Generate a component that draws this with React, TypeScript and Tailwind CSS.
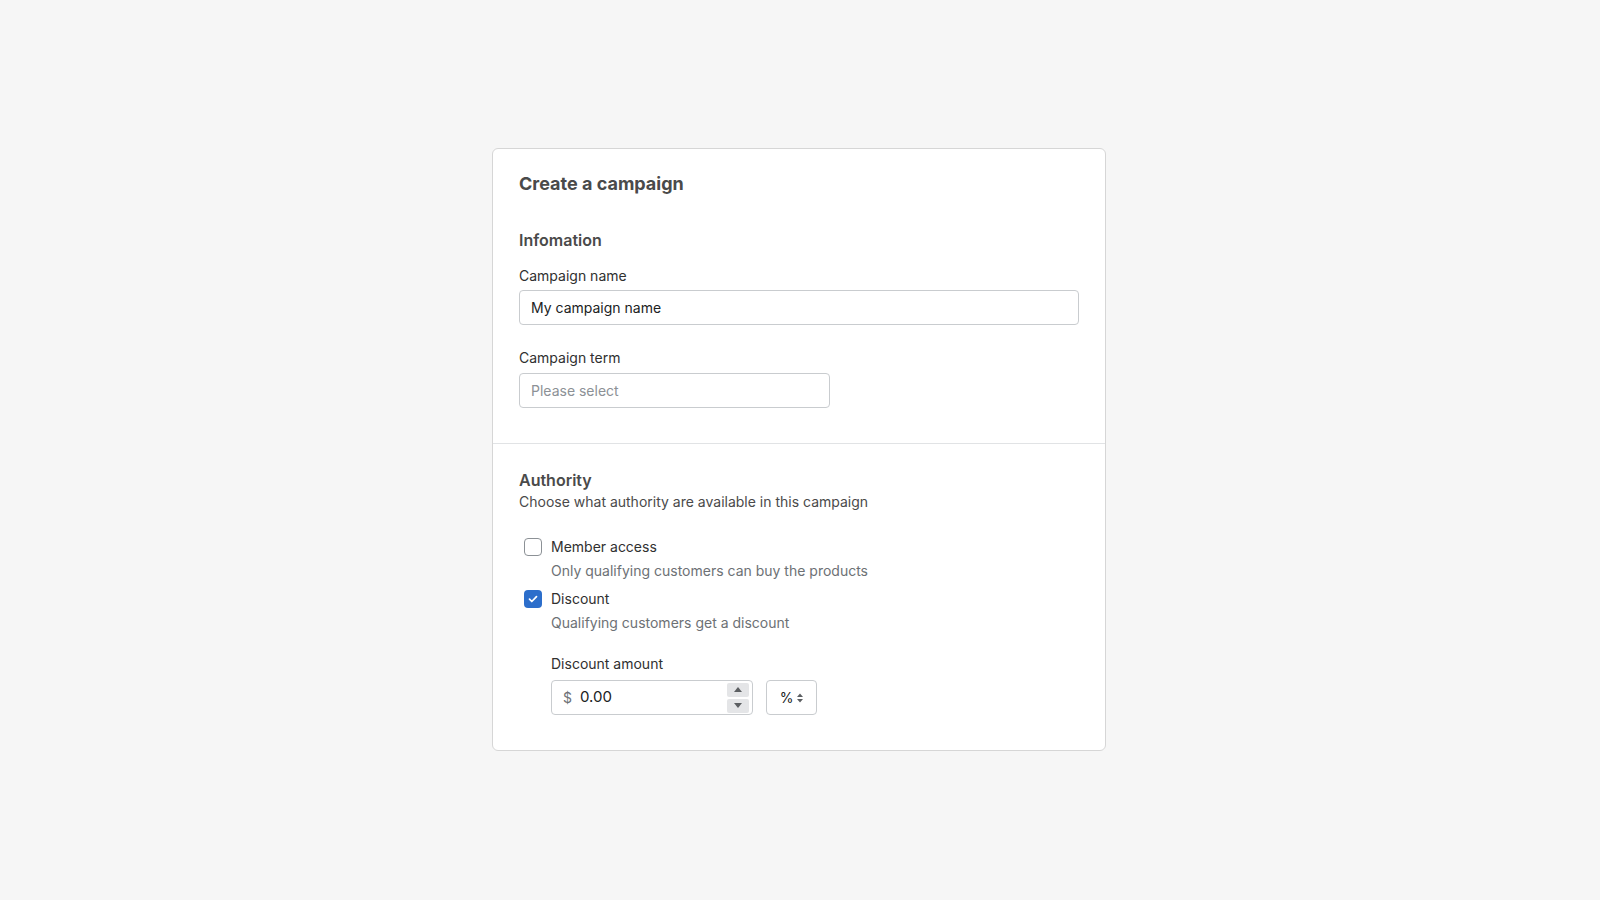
import { useState } from "react";

function Checkbox({ checked, onChange }: { checked: boolean; onChange: () => void }) {
  return (
    <button
      type="button"
      onClick={onChange}
      className={
        checked
          ? "flex h-[18px] w-[18px] shrink-0 items-center justify-center rounded-[4px] bg-[#2c6ecb]"
          : "flex h-[18px] w-[18px] shrink-0 items-center justify-center rounded-[4px] border-[1.5px] border-[#8c9196] bg-white"
      }
    >
      {checked && (
        <svg width="12" height="12" viewBox="0 0 12 12" fill="none">
          <path d="M2.5 6.2l2.3 2.3L9.5 3.6" stroke="white" strokeWidth="1.7" strokeLinecap="round" strokeLinejoin="round" />
        </svg>
      )}
    </button>
  );
}

function Option({
  label,
  help,
  checked,
  onChange,
}: {
  label: string;
  help: string;
  checked: boolean;
  onChange: () => void;
}) {
  return (
    <div className="flex gap-[9px] pl-[5px]">
      <div className="flex h-5 items-center">
        <Checkbox checked={checked} onChange={onChange} />
      </div>
      <div>
        <div className="text-[14px] leading-5 text-[#303030]">{label}</div>
        <div className="mt-[4px] text-[14px] leading-5 text-[#6d7175]">{help}</div>
      </div>
    </div>
  );
}

export default function App() {
  const [member, setMember] = useState(false);
  const [discount, setDiscount] = useState(true);

  return (
    <div className="flex min-h-screen justify-center bg-[#f6f6f6] pr-[2px] pt-[148px] font-['Inter',sans-serif]">
      <div className="h-fit w-[614px] rounded-[6px] border border-[#d6d6d6] bg-white">
        <section className="px-[26px] pb-[35px] pt-[23px]">
          <h1 className="text-[18px] font-bold leading-6 text-[#4a4a4a]">Create a campaign</h1>

          <h2 className="mt-[33px] text-[16px] font-semibold leading-[22px] text-[#4a4a4a]">Infomation</h2>

          <label className="mt-[15px] block text-[14px] leading-5 text-[#303030]">Campaign name</label>
          <input
            defaultValue="My campaign name"
            className="mt-[4px] block h-[35px] w-full rounded-[4px] border border-[#c9cccf] px-[11px] text-[14px] text-[#202223] outline-none"
          />

          <label className="mt-[23px] block text-[14px] leading-5 text-[#303030]">Campaign term</label>
          <div className="mt-[5px] flex h-[35px] w-[311px] items-center rounded-[4px] border border-[#c9cccf] px-[11px] text-[14px] text-[#8c9196]">
            Please select
          </div>
        </section>

        <div className="h-px bg-[#e1e3e5]" />

        <section className="px-[26px] pb-[35px] pt-[25px]">
          <h2 className="text-[16px] font-semibold leading-[22px] text-[#4a4a4a]">Authority</h2>
          <p className="mt-px text-[14px] leading-5 text-[#4a4a4a]">Choose what authority are available in this campaign</p>

          <div className="mt-[25px] flex flex-col gap-[8px]">
            <Option
              label="Member access"
              help="Only qualifying customers can buy the products"
              checked={member}
              onChange={() => setMember(!member)}
            />
            <Option
              label="Discount"
              help="Qualifying customers get a discount"
              checked={discount}
              onChange={() => setDiscount(!discount)}
            />
          </div>

          <div className="mt-[21px] pl-[32px]">
            <label className="block text-[14px] leading-5 text-[#303030]">Discount amount</label>
            <div className="mt-[6px] flex gap-[13px]">
              <div className="flex h-[35px] w-[202px] items-center rounded-[4px] border border-[#c9cccf] pl-[11px] pr-[3px]">
                <span className="text-[14px] text-[#6d7175]">$</span>
                <span className="ml-[8px] flex-1 text-[15px] text-[#202223]">0.00</span>
                <div className="flex flex-col gap-[2px]">
                  <div className="flex h-[14px] w-[22px] items-center justify-center rounded-[2px] bg-[#e4e5e7]">
                    <svg width="8" height="5" viewBox="0 0 8 5">
                      <path d="M4 0L8 5H0z" fill="#5c5f62" />
                    </svg>
                  </div>
                  <div className="flex h-[14px] w-[22px] items-center justify-center rounded-[2px] bg-[#e4e5e7]">
                    <svg width="8" height="5" viewBox="0 0 8 5">
                      <path d="M0 0h8L4 5z" fill="#5c5f62" />
                    </svg>
                  </div>
                </div>
              </div>
              <div className="flex h-[35px] w-[51px] items-center justify-center gap-[4px] rounded-[4px] border border-[#c9cccf] text-[14px] text-[#202223]">
                <span>%</span>
                <svg width="6" height="10" viewBox="0 0 6 10">
                  <path d="M3 0.5L6 4H0z M0 6h6L3 9.5z" fill="#5c5f62" />
                </svg>
              </div>
            </div>
          </div>
        </section>
      </div>
    </div>
  );
}
